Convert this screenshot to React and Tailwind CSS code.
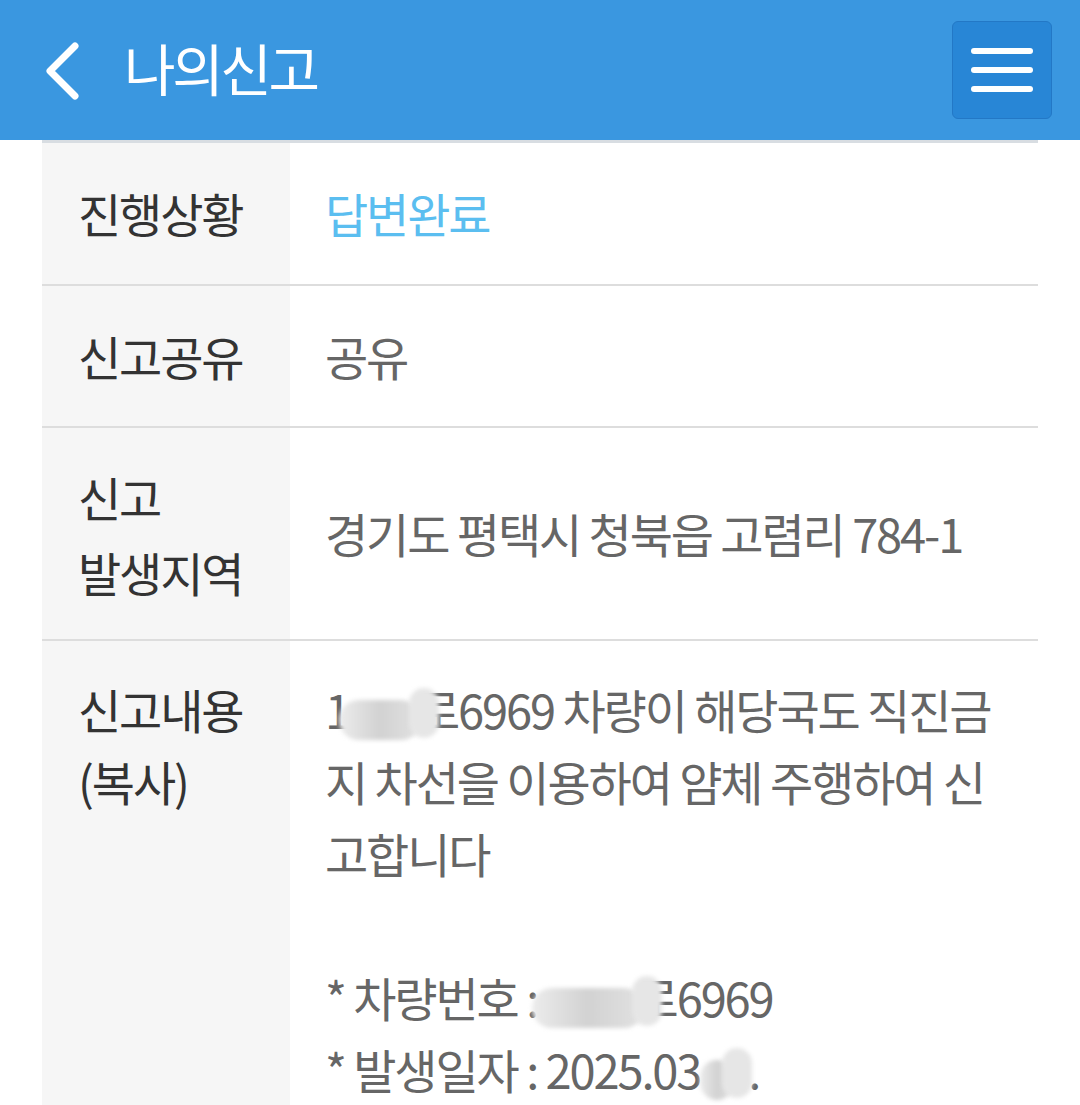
import React from 'react';

const font = { fontFamily: '"Noto Sans CJK KR", "Noto Sans", sans-serif' };

// 가려진(모자이크) 부분
const Blur = ({ w, className = '' }) => (
  <span className={`relative z-10 inline-block align-middle h-[48px] ${className}`} style={{ width: w }}>
    <span className="absolute left-0 right-[18px] top-[8px] bottom-0 rounded-full bg-gradient-to-r from-[#ececec] via-[#d2d2d2] to-[#e2e2e2] blur-[2px]" />
    <span className="absolute right-0 w-[30px] -top-[4px] bottom-[2px] rounded-full bg-[#e6e6e6] blur-[2px]" />
  </span>
);

const Row = ({ label, children, className = '' }) => (
  <div className={`flex border-b-2 border-[#dddddd] ${className}`}>
    <div className="w-[248px] shrink-0 bg-[#f6f6f6] pl-[36px] flex items-center text-[#333333]">
      {label}
    </div>
    <div className="flex-1 pl-[35px] pr-[30px] flex items-center text-[#666666]">{children}</div>
  </div>
);

export default function App() {
  return (
    <div className="w-[1080px] h-[1105px] overflow-hidden bg-white" style={font}>
      {/* header */}
      <div className="h-[140px] bg-[#3a97e0] flex items-center justify-between pl-[44px] pr-[28px]">
        <div className="flex items-center gap-[40px]">
          <svg width="40" height="60" viewBox="0 0 40 60" className="mt-[2px]">
            <path d="M31 5 L6 30 L31 55" fill="none" stroke="white" strokeWidth="7" strokeLinecap="round" strokeLinejoin="round" />
          </svg>
          <h1 className="text-white text-[56px] leading-none tracking-[-0.06em] pb-[6px]">나의신고</h1>
        </div>
        <button className="w-[100px] h-[98px] rounded-[6px] bg-[#2886d6] border border-[#2378c6] flex flex-col items-center justify-center gap-[13px]">
          <span className="block w-[62px] h-[6px] rounded-full bg-white" />
          <span className="block w-[62px] h-[6px] rounded-full bg-white" />
          <span className="block w-[62px] h-[6px] rounded-full bg-white" />
        </button>
      </div>

      {/* table */}
      <div className="px-[42px]">
        <div className="border-t-[3px] border-[#d8dde2] text-[47px] tracking-[-0.045em]">
          <Row label="진행상황" className="h-[143px]">
            <span className="text-[#5bbef0]">답변완료</span>
          </Row>
          <Row label="신고공유" className="h-[142px]">
            <span>공유</span>
          </Row>
          <Row
            className="h-[213px]"
            label={
              <div className="leading-[75px]">
                신고
                <br />
                발생지역
              </div>
            }
          >
            <span>경기도 평택시 청북읍 고렴리 784-1</span>
          </Row>
          <div className="flex h-[480px]">
            <div className="w-[248px] shrink-0 bg-[#f6f6f6] pl-[36px] pt-[32px] text-[#333333] leading-[72px]">
              신고내용
              <br />
              (복사)
            </div>
            <div className="flex-1 pl-[35px] pr-[20px] pt-[32px] text-[#666666] leading-[72px] whitespace-nowrap">
              <div>
                1<Blur w={100} className="-ml-[10px] -mr-[22px]" />로6969 차량이 해당국도 직진금
              </div>
              <div>지 차선을 이용하여 얌체 주행하여 신</div>
              <div>고합니다</div>
              <div>&nbsp;</div>
              <div>
                * 차량번호 : <Blur w={130} className="-ml-[14px] -mr-[26px]" />로6969
              </div>
              <div>
                * 발생일자 : 2025.03<Blur w={52} className="-mr-[4px]" />.
              </div>
            </div>
          </div>
        </div>
      </div>
    </div>
  );
}
